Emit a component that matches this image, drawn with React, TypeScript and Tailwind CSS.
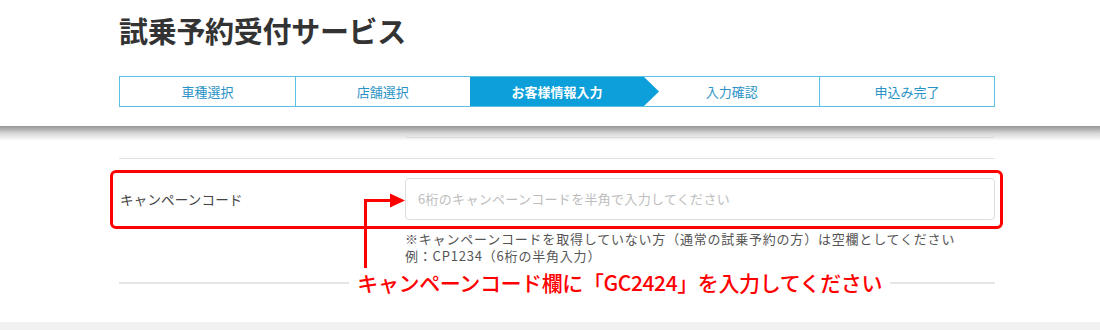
const STEPS = ["車種選択", "店舗選択", "お客様情報入力", "入力確認", "申込み完了"];
const ACTIVE = 2;

function StepBar() {
  return (
    <div className="grid grid-cols-5 h-[31px] border border-[#5cc0e2] bg-white">
      {STEPS.map((label, i) => {
        const active = i === ACTIVE;
        const divider = i > 0 && i !== ACTIVE && i !== ACTIVE + 1;
        return (
          <div
            key={label}
            className={`relative flex items-center justify-center text-[13px] ${
              divider ? "border-l border-[#5cc0e2]" : ""
            } ${active ? "bg-[#0c9fda] text-white font-bold" : "text-[#2a93c6]"}`}
          >
            {label}
            {active && (
              <span className="absolute -right-[15px] top-0 h-full w-[15px] z-10">
                <svg viewBox="0 0 15 29" preserveAspectRatio="none" className="w-full h-full">
                  <polygon points="0,0 15,14.5 0,29" fill="#0c9fda" />
                </svg>
              </span>
            )}
          </div>
        );
      })}
    </div>
  );
}

export default function App() {
  return (
    <div
      className="relative w-[1100px] h-[330px] bg-white overflow-hidden text-[#333]"
      style={{ fontFamily: '"Noto Sans CJK JP", "Noto Sans", sans-serif' }}
    >
      {/* header card */}
      <div className="relative z-10 h-[126px] bg-white">
        <div className="w-[876px] ml-[119px] pt-[10px]">
          <h1 className="h-[40px] leading-[40px] text-[29px] font-bold text-[#333] tracking-[-0.3px]">
            試乗予約受付サービス
          </h1>
          <div className="mt-[26px]">
            <StepBar />
          </div>
        </div>
      </div>
      {/* shadow of header card */}
      <div className="absolute left-0 right-0 top-[126px] h-[15px] z-20 bg-gradient-to-b from-[#959595] via-[#d8d8d8] to-transparent" />

      {/* form below */}
      <div className="w-[876px] ml-[119px]">
        <div className="flex">
          <div className="w-[286px]" />
          <div className="flex-1 h-[12px] border-x border-b border-[#dcdcdc] rounded-b-[4px]" />
        </div>
        <div className="mt-[20px] h-[1px] bg-[#e2e2e2]" />

        <div className="relative mt-[19px]">
          <div className="absolute -left-[9px] -right-[8px] -top-[8px] -bottom-[9px] border-[3px] border-[#ff0000] rounded-[6px] pointer-events-none" />
          <div className="flex items-center">
            <div className="w-[286px] text-[13.5px] text-[#444] pl-[1px] tracking-[0.2px]">キャンペーンコード</div>
            <div className="flex-1 h-[42px] border border-[#dcdcdc] rounded-[4px] flex items-center pl-[12px] text-[13px] tracking-[0.3px] text-[#bdbdbd]">
              6桁のキャンペーンコードを半角で入力してください
            </div>
          </div>
        </div>

        <div className="ml-[286px] mt-[10px] text-[13px] leading-[17px] tracking-[0.8px] text-[#555]">
          <p>※キャンペーンコードを取得していない方（通常の試乗予約の方）は空欄としてください</p>
          <p>例：CP1234（6桁の半角入力）</p>
        </div>

        <div className="flex items-center mt-[4px] h-[30px]">
          <div className="flex-1 h-[2px] bg-[#e6e6e6]" />
          <p className="pl-[8px] pr-[8px] text-[21px] font-medium text-[#ff0000] tracking-[-0.4px] whitespace-nowrap">
            キャンペーンコード欄に「GC2424」を入力してください
          </p>
          <div className="w-[105px] h-[2px] bg-[#e6e6e6]" />
        </div>
      </div>

      {/* red pointer arrow */}
      <svg className="absolute left-[360px] top-[190px] w-[50px] h-[80px] pointer-events-none" viewBox="0 0 50 80">
        <polyline points="5.5,78 5.5,10.5 32,10.5" fill="none" stroke="#ff0000" strokeWidth="3" />
        <polygon points="30,3.5 45,10.5 30,17.5" fill="#ff0000" />
      </svg>

      <div className="absolute left-0 right-0 bottom-0 h-[8px] bg-[#f1f1f1]" />
    </div>
  );
}
